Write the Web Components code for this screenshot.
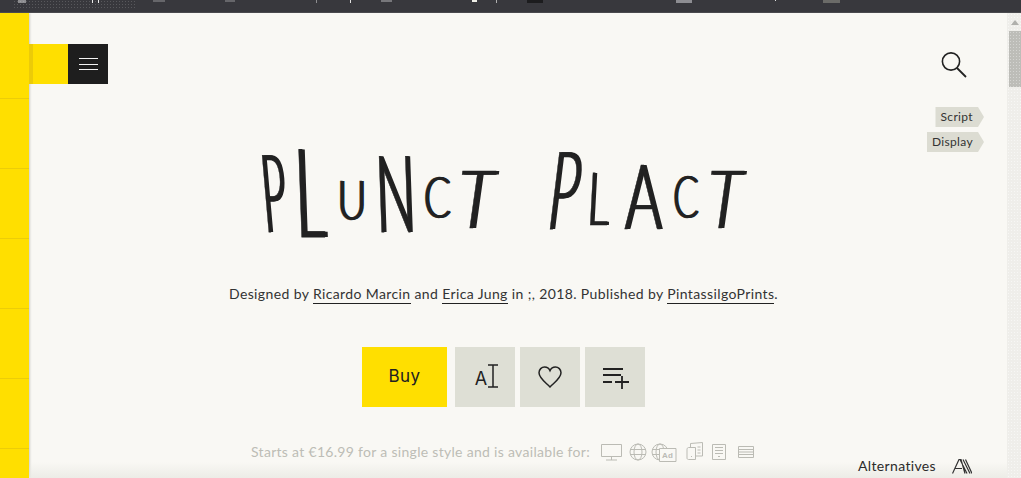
<!DOCTYPE html>
<html>
<head>
<meta charset="utf-8">
<title>Plunct Plact</title>
<style>
    html, body { margin: 0; height: 100%; overflow: hidden; }
    body { background: #f9f8f4; font-family: "Lato", "Liberation Sans", sans-serif; color: #222; }
</style>
</head>
<body>
<font-page>
    <top-strip slot="top"></top-strip>
    <side-rail slot="rail"></side-rail>
    <page-head slot="head"></page-head>
    <tag-list slot="head">
        <tag-flag>Script</tag-flag>
        <tag-flag>Display</tag-flag>
    </tag-list>
    <hand-title slot="main"></hand-title>
    <credit-line slot="main"></credit-line>
    <action-row slot="main"></action-row>
    <format-line slot="main"></format-line>
    <alt-link slot="over"></alt-link>
    <fake-scrollbar slot="bar"></fake-scrollbar>
</font-page>

<script>
class FontPage extends HTMLElement {
    connectedCallback() {
        this.attachShadow({ mode: 'open' });
        this.shadowRoot.innerHTML = `
            <style>
                :host {
                    display: grid;
                    grid-template-columns: 29px 1fr 29px 14px;
                    grid-template-rows: 13px 1fr;
                    height: 478px;
                    width: 1021px;
                    overflow: hidden;
                    position: relative;
                }
                .top { grid-column: 1 / -1; }
                .rail { grid-row: 2; grid-column: 1; }
                .center { grid-row: 2; grid-column: 2; min-width: 0; }
                .bar { grid-row: 2; grid-column: 4; }
                .fade {
                    position: absolute;
                    left: 29px;
                    right: 14px;
                    bottom: 0;
                    height: 16px;
                    pointer-events: none;
                    background: linear-gradient(to bottom, rgba(232, 232, 226, 0), rgba(232, 232, 226, 0.75));
                }
            </style>
            <div class="top"><slot name="top"></slot></div>
            <div class="rail"><slot name="rail"></slot></div>
            <div class="center">
                <slot name="head"></slot>
                <slot name="main"></slot>
            </div>
            <div class="bar"><slot name="bar"></slot></div>
            <div class="fade"></div>
            <slot name="over"></slot>
        `;
    }
}

class TopStrip extends HTMLElement {
    connectedCallback() {
        this.attachShadow({ mode: 'open' });
        // bits of the browser's tab row, cut off by the top of the capture
        const marks = [
            [18, 8, 3, '#8d8d90'], [92, 1, 3, '#e8e8e8'], [98, 1, 3, '#e8e8e8'], [153, 12, 2, '#66666a'],
            [225, 10, 2, '#66666a'], [316, 1, 3, '#8d8d90'], [350, 1, 3, '#e0e0e0'], [381, 11, 2, '#77777b'],
            [472, 5, 2, '#f0f0e8'], [496, 1, 3, '#b0b0b0'], [527, 16, 3, '#1c1c1e'], [676, 16, 3, '#8d8d92'],
            [775, 1, 1, '#dddddd'], [823, 17, 3, '#6b6b68']
        ];
        let x = 0;
        let html = '';
        for (const [left, w, h, c] of marks) {
            html += `<i style="margin-left:${left - x}px;width:${w}px;height:${h}px;background:${c}"></i>`;
            x = left + w;
        }
        this.shadowRoot.innerHTML = `
            <style>
                :host {
                    display: flex;
                    height: 13px;
                    background: #38383d;
                    border-bottom: 1px solid #4a4a4e;
                    box-sizing: border-box;
                    align-items: flex-start;
                    position: relative;
                }
                :host::before {
                    content: '';
                    position: absolute;
                    left: 13px;
                    top: 0;
                    width: 124px;
                    height: 9px;
                    background: radial-gradient(circle, rgba(255, 255, 255, 0.16) 0.7px, transparent 0.8px) 0 0 / 3px 3px;
                }
                i { display: block; flex: none; }
            </style>
            ${html}
        `;
    }
}

class SideRail extends HTMLElement {
    connectedCallback() {
        this.attachShadow({ mode: 'open' });
        this.shadowRoot.innerHTML = `
            <style>
                :host {
                    display: block;
                    height: 100%;
                    background:
                        linear-gradient(#ffdf00, #ffdf00) 0 0 / 100% 70px no-repeat,
                        repeating-linear-gradient(to bottom, #ffdf00 0, #ffdf00 15px, #eccd08 15px, #eccd08 16px, #ffdf00 16px, #ffdf00 70px);
                    box-shadow: 1px 0 2px rgba(0, 0, 0, 0.18);
                }
            </style>
        `;
    }
}

class PageHead extends HTMLElement {
    connectedCallback() {
        this.attachShadow({ mode: 'open' });
        this.shadowRoot.innerHTML = `
            <style>
                :host {
                    display: flex;
                    justify-content: space-between;
                    align-items: flex-start;
                    padding-top: 31px;
                    height: 71px;
                    box-sizing: border-box;
                }
                .menu { display: flex; height: 40px; }
                .tab { width: 39px; background: linear-gradient(to right, #eccb08 0, #eccb08 4px, #ffdf00 4px); }
                .burger { width: 40px; background: #1e1e1e; display: flex; align-items: center; justify-content: center; }
                .burger svg { margin-left: 1px; }
                .search { margin: 7px 9px 0 0; }
                svg { display: block; }
            </style>
            <div class="menu">
                <div class="tab"></div>
                <div class="burger">
                    <svg width="19" height="12" viewBox="0 0 19 12" stroke="#f4f4f4" stroke-width="1">
                        <path d="M0 .5h19M0 6.500h19M0 11.500h19"/>
                    </svg>
                </div>
            </div>
            <svg class="search" width="29" height="28" viewBox="0 0 29 28" fill="none" stroke="#222" stroke-width="1.6">
                <circle cx="11" cy="10.500" r="8.600"/>
                <path d="M17 17L26 26" stroke-width="1.800"/>
            </svg>
        `;
    }
}

class TagList extends HTMLElement {
    connectedCallback() {
        this.attachShadow({ mode: 'open' });
        this.shadowRoot.innerHTML = `
            <style>
                :host { display: flex; flex-direction: column; align-items: flex-end; gap: 5px; margin-top: 23px; height: 45px; margin-right: -6px; }
            </style>
            <slot></slot>
        `;
    }
}

class TagFlag extends HTMLElement {
    connectedCallback() {
        this.attachShadow({ mode: 'open' });
        this.shadowRoot.innerHTML = `
            <style>
                :host {
                    display: block;
                    height: 20px;
                    padding: 0 11px 0 5px;
                    font: 12px/20px "Lato", "Liberation Sans", sans-serif;
                    letter-spacing: 0.35px;
                    color: #333;
                    background: radial-gradient(circle, rgba(255, 255, 255, 0.3) 0.6px, transparent 0.7px) 0 0 / 4px 4px, #dcdcd2;
                    clip-path: polygon(0 0, calc(100% - 6px) 0, 100% 50%, calc(100% - 6px) 100%, 0 100%);
                }
            </style>
            <slot></slot>
        `;
    }
}

// the hand-drawn face isn't installed: each letter is fitted to the box it has in the screenshot
const LETTERS = [
    { ch: 'P', cell: 38, x0: 1, x1: 26, top: 0, bot: 78, lean: 5 },
    { ch: 'L', cell: 41, x0: 0, x1: 27, top: -6, bot: 83, lean: 2 },
    { ch: 'U', cell: 39, x0: 0, x1: 22, top: 26, bot: 66, lean: 0 },
    { ch: 'N', cell: 46, x0: 0, x1: 32, top: 1, bot: 78, lean: 2 },
    { ch: 'C', cell: 38, x0: 0, x1: 24, top: 22, bot: 64, lean: 0 },
    { ch: 'T', cell: 34, x0: -4, x1: 30, top: 15, bot: 73, lean: -8 },
    { ch: ' ', cell: 53 },
    { ch: 'P', cell: 40, x0: 0, x1: 32, top: -3, bot: 75, lean: -7 },
    { ch: 'L', cell: 35, x0: 0, x1: 20, top: 17, bot: 70, lean: -3 },
    { ch: 'A', cell: 49, x0: 0, x1: 36, top: 9, bot: 74, lean: 0 },
    { ch: 'C', cell: 38, x0: 0, x1: 23, top: 20, bot: 64, lean: 0 },
    { ch: 'T', cell: 34, x0: -4, x1: 29, top: 15, bot: 73, lean: -8 }
];

class HandTitle extends HTMLElement {
    connectedCallback() {
        this.attachShadow({ mode: 'open' });
        const ctx = document.createElement('canvas').getContext('2d');
        ctx.font = '300 100px Lato';
        const spans = LETTERS.map(l => {
            if (l.ch === ' ') return `<span style="width:${l.cell}px">&nbsp;</span>`;
            const m = ctx.measureText(l.ch);
            const baseline = (85 - (m.fontBoundingBoxAscent + m.fontBoundingBoxDescent)) / 2 + m.fontBoundingBoxAscent;
            const inkW = m.actualBoundingBoxLeft + m.actualBoundingBoxRight;
            const inkH = m.actualBoundingBoxAscent + m.actualBoundingBoxDescent;
            // +2.5: half of the widest text-shadow offset below
            const inkX = (m.actualBoundingBoxRight - m.actualBoundingBoxLeft) / 2 + 2.5;
            const inkY = baseline + (m.actualBoundingBoxDescent - m.actualBoundingBoxAscent) / 2;
            const lean = Math.tan(Math.abs(l.lean) * Math.PI / 180) * (l.bot - l.top);
            const sx = Math.max(l.x1 - l.x0 - lean * (l.ch === 'T' ? 0 : 1), 8) / inkW;
            const sy = (l.bot - l.top) / inkH;
            const tx = (l.x0 + l.x1) / 2;
            const ty = (l.top + l.bot) / 2;
            const t = `translate(${tx}px,${ty}px) skewX(${l.lean}deg) scale(${sx},${sy}) translate(${-inkX}px,${-inkY}px)`;
            return `<span style="width:${l.cell}px;transform:${t}">${l.ch}</span>`;
        }).join('');
        // the letters get squeezed a lot sideways, the shadow keeps the stems as thick as the bars
        this.shadowRoot.innerHTML = `
            <style>
                :host {
                    display: flex;
                    justify-content: center;
                    height: 85px;
                    margin-top: 3px;
                    padding-left: 1px;
                    font: 300 100px/85px "Lato", "Liberation Sans", sans-serif;
                    color: #222;
                    -webkit-text-stroke: 0.8px #222;
                    text-shadow: 2.5px 0 0 #222, 5px 0 0 #222;
                    white-space: pre;
                }
                span { display: block; flex: none; transform-origin: 0 0; }
            </style>
            ${spans}
        `;
    }
}

class CreditLine extends HTMLElement {
    connectedCallback() {
        this.attachShadow({ mode: 'open' });
        this.shadowRoot.innerHTML = `
            <style>
                :host {
                    display: block;
                    margin-top: 44px;
                    text-align: center;
                    font: 14px/20px "Lato", "Liberation Sans", sans-serif;
                    letter-spacing: 0.38px;
                    color: #333;
                    white-space: nowrap;
                }
                a { color: inherit; text-decoration: none; border-bottom: 1px solid #222; padding-bottom: 1px; }
            </style>
            Designed by <a>Ricardo Marcin</a> and <a>Erica Jung</a> in ;, 2018. Published by <a>PintassilgoPrints</a>.
        `;
    }
}

class ActionRow extends HTMLElement {
    connectedCallback() {
        this.attachShadow({ mode: 'open' });
        this.shadowRoot.innerHTML = `
            <style>
                :host { display: flex; justify-content: center; gap: 5px; margin-top: 43px; height: 60px; }
                .buy {
                    width: 85px;
                    margin-right: 3px;
                    background: #ffdf00;
                    color: #222;
                    display: flex;
                    align-items: center;
                    justify-content: center;
                    font: 17px "Inter", "Liberation Sans", sans-serif;
                    letter-spacing: 0.4px;
                    padding-bottom: 2px;
                    box-sizing: border-box;
                }
                .btn {
                    width: 60px;
                    background: radial-gradient(circle, rgba(255, 255, 255, 0.28) 0.6px, transparent 0.7px) 0 0 / 4px 4px, #dedfd5;
                    display: flex;
                    align-items: center;
                    justify-content: center;
                }
                svg { display: block; fill: none; stroke: #222; stroke-width: 1.5; }
                .a {
                    font: 18px "Inter", "Liberation Sans", sans-serif;
                    color: #222;
                    display: flex;
                    align-items: center;
                    gap: 1px;
                    margin-left: 3px;
                }
            </style>
            <div class="buy">Buy</div>
            <div class="btn">
                <div class="a"><span style="margin-top:3px">A</span><svg width="10" height="24" viewBox="0 0 10 24" style="margin-top:-2px"><path d="M0 1h10M5 1v22M0 23h10"/></svg></div>
            </div>
            <div class="btn">
                <svg width="24" height="22" viewBox="0 0 24 22"><path d="M12 21C7 16 1 12 1 6.800 1 3.400 3.600 1 6.600 1 9 1 11 2.400 12 4.600 13 2.400 15 1 17.400 1 20.400 1 23 3.400 23 6.800 23 12 17 16 12 21Z"/></svg>
            </div>
            <div class="btn">
                <svg width="27" height="24" viewBox="0 0 27 24" style="stroke-width:1.800"><path d="M1 4h20M1 10h18M1 17h9M13 17h14M20 11v13"/></svg>
            </div>
        `;
    }
}

class FormatLine extends HTMLElement {
    connectedCallback() {
        this.attachShadow({ mode: 'open' });
        this.shadowRoot.innerHTML = `
            <style>
                :host {
                    display: flex;
                    justify-content: center;
                    align-items: center;
                    margin-top: 34px;
                    padding-right: 2px;
                    height: 22px;
                    font: 14px/20px "Lato", "Liberation Sans", sans-serif;
                    letter-spacing: 0.3px;
                    color: #bdbdb6;
                    white-space: nowrap;
                }
                .icons { display: flex; align-items: center; margin-left: 11px; }
                svg { display: block; fill: none; stroke: #bbbbb4; stroke-width: 1; flex: none; }
                text { font: 700 8px "Liberation Sans", sans-serif; fill: #bbbbb4; stroke: none; }
            </style>
            Starts at €16.99 for a single style and is available for:
            <div class="icons">
                <svg width="21" height="17" viewBox="0 0 21 17"><path d="M.5 .5h20v12h-20zM10.500 12.500v3.500M5 16h11"/></svg>
                <svg width="18" height="18" viewBox="0 0 18 18" style="margin-left:7px"><circle cx="9" cy="9" r="8"/><ellipse cx="9" cy="9" rx="4" ry="8"/><path d="M1 6.500h16M1 11.500h16"/></svg>
                <svg width="26" height="19" viewBox="0 0 26 19" style="margin-left:4px"><circle cx="9" cy="9" r="8"/><ellipse cx="9" cy="9" rx="4" ry="8"/><path d="M1 6.500h16M1 11.500h16"/><path d="M8.500 5.500h16.500v13h-16.500z" fill="#f9f8f4"/><text x="11" y="15">Ad</text></svg>
                <svg width="17" height="18" viewBox="0 0 17 18" style="margin-left:9px;margin-top:-3px"><path d="M1 7.500c0-1 .6-2 1.500-2h7v12h-7c-.9 0-1.500-.6-1.500-1.500zM4.500 5V1.500l12-1V14h-7M11.500 5h3M11.500 8h3M11.500 11h3M5 14.500h1"/></svg>
                <svg width="16" height="16" viewBox="0 0 16 16" style="margin-left:8px"><path d="M1.500 .5h13v15h-13zM4 3.500h8M4 6.500h8M4 9.500h8M7 12.500h2"/></svg>
                <svg width="16" height="12" viewBox="0 0 16 12" style="margin-left:11px"><path d="M.5 .5h15v11h-15zM.5 3.500h15M.5 6h15M.5 8.500h15"/></svg>
            </div>
        `;
    }
}

class AltLink extends HTMLElement {
    connectedCallback() {
        this.attachShadow({ mode: 'open' });
        this.shadowRoot.innerHTML = `
            <style>
                :host {
                    position: absolute;
                    right: 49px;
                    bottom: 2px;
                    display: flex;
                    align-items: center;
                    gap: 16px;
                    font: 14px/20px "Lato", "Liberation Sans", sans-serif;
                    letter-spacing: 0.35px;
                    color: #2b2b2b;
                }
                svg { display: block; fill: none; stroke: #333; stroke-width: 1.2; }
            </style>
            Alternatives
            <svg width="20" height="15" viewBox="0 0 20 15"><path d="M.5 14.500L7 .5h2L13 14.500M3 9.500h7M8 .5L15 14.500M11 .5L18 14.500M13.500 .5L20 14.500"/></svg>
        `;
    }
}

class FakeScrollbar extends HTMLElement {
    connectedCallback() {
        this.attachShadow({ mode: 'open' });
        this.shadowRoot.innerHTML = `
            <style>
                :host {
                    display: block;
                    height: 100%;
                    background: radial-gradient(circle, rgba(255, 255, 255, 0.5) 0.6px, transparent 0.7px) 0 0 / 3px 3px, #efeeea;
                    padding-top: 18px;
                    box-sizing: border-box;
                    position: relative;
                }
                .arrow { position: absolute; top: 7px; left: 4px; width: 0; height: 0; border: 4px solid transparent; border-top: 0; border-bottom: 5px solid #b0b0ac; }
                .thumb {
                    margin-left: 2px;
                    width: 12px;
                    height: 56px;
                    background: radial-gradient(circle, rgba(255, 255, 255, 0.35) 0.6px, transparent 0.7px) 0 0 / 3px 3px, #bdbdb8;
                }
            </style>
            <div class="arrow"></div>
            <div class="thumb"></div>
        `;
    }
}

customElements.define('font-page', FontPage);
customElements.define('top-strip', TopStrip);
customElements.define('side-rail', SideRail);
customElements.define('page-head', PageHead);
customElements.define('tag-list', TagList);
customElements.define('tag-flag', TagFlag);
customElements.define('hand-title', HandTitle);
customElements.define('credit-line', CreditLine);
customElements.define('action-row', ActionRow);
customElements.define('format-line', FormatLine);
customElements.define('alt-link', AltLink);
customElements.define('fake-scrollbar', FakeScrollbar);
</script>
</body>
</html>
